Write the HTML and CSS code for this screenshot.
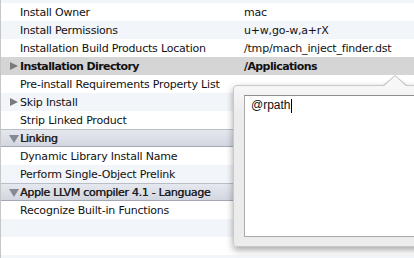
FILE: index.html
```html
<!DOCTYPE html>
<html lang="en">
<head>
  <meta charset="UTF-8" />
  <title>Build Settings</title>
  <link rel="stylesheet" href="styles.css">
</head>
<body>

  <div class="settings">
    <div class="row alt top-row">
      <span class="label">Install Group</span>
      <span class="value">staff</span>
    </div>
    <div class="row">
      <span class="label">Install Owner</span>
      <span class="value">mac</span>
    </div>
    <div class="row alt">
      <span class="label">Install Permissions</span>
      <span class="value">u+w,go-w,a+rX</span>
    </div>
    <div class="row">
      <span class="label">Installation Build Products Location</span>
      <span class="value">/tmp/mach_inject_finder.dst</span>
    </div>
    <div class="row selected bold">
      <span class="disclosure closed"></span>
      <span class="label">Installation Directory</span>
      <span class="value">/Applications</span>
    </div>
    <div class="row">
      <span class="label">Pre-install Requirements Property List</span>
      <span class="value"></span>
    </div>
    <div class="row alt">
      <span class="disclosure closed"></span>
      <span class="label">Skip Install</span>
      <span class="value"></span>
    </div>
    <div class="row">
      <span class="label">Strip Linked Product</span>
      <span class="value"></span>
    </div>

    <div class="row section">
      <span class="disclosure open"></span>
      <span class="label">Linking</span>
    </div>
    <div class="row">
      <span class="label">Dynamic Library Install Name</span>
      <span class="value"></span>
    </div>
    <div class="row alt">
      <span class="label">Perform Single-Object Prelink</span>
      <span class="value"></span>
    </div>

    <div class="row section">
      <span class="disclosure open"></span>
      <span class="label">Apple LLVM compiler 4.1 - Language</span>
    </div>
    <div class="row">
      <span class="label">Recognize Built-in Functions</span>
      <span class="value"></span>
    </div>
    <div class="row alt"></div>
    <div class="row"></div>
    <div class="row alt short"></div>
  </div>

  <!-- value editor popover for Installation Directory -->
  <div class="popover">
    <div class="editor">
      <span class="editor-text">@rpath</span><span class="caret"></span>
    </div>
  </div>

</body>
</html>
```

FILE: styles.css
```css
html {
  overflow: hidden;
}

body {
  margin: 0;
  background-color: white;
  font-family: 'DejaVu Sans', sans-serif;
  font-size: 11px;
  color: #111;
  overflow: hidden;
  position: relative;
  height: 258px;
}

.settings {
  border-left: 1px solid #c6c6c6;
  margin-top: -15px;
}

.row {
  display: flex;
  align-items: center;
  position: relative;
  height: 18px;
  box-sizing: border-box;
  padding-top: 1px;
  letter-spacing: -0.2px;
  white-space: nowrap;
  background-color: white;
}

.row.short {
  height: 3px;
}

.row.alt {
  background-color: #f2f5f9;
}

.row.selected {
  background-color: #d5d5d5;
}

.row.bold {
  font-weight: bold;
  letter-spacing: -0.6px;
}

.label {
  width: 224px;
  padding-left: 19px;
  overflow: hidden;
}

.value {
  flex: 1;
}

.section {
  background: linear-gradient(#e6e8ef, #d2d6df);
  border-top: 1px solid #b9bdc7;
  border-bottom: 1px solid #a3a8b3;
  letter-spacing: -0.3px;
  color: #1e1e1e;
  text-shadow: 0.4px 0 0 #333;
}

.disclosure {
  position: absolute;
  width: 0;
  height: 0;
}

.disclosure.closed {
  left: 9px;
  top: 5px;
  border-top: 4.5px solid transparent;
  border-bottom: 4.5px solid transparent;
  border-left: 8px solid #7b7b7b;
}

.disclosure.open {
  left: 8px;
  top: 5px;
  border-left: 5px solid transparent;
  border-right: 5px solid transparent;
  border-top: 8px solid #858a94;
}

.popover {
  position: absolute;
  left: 233px;
  top: 85px;
  width: 200px;
  height: 162px;
  background: linear-gradient(#f7f7f7, #ececec 30px);
  border: 1px solid #c9c9c9;
  border-radius: 4px;
  box-shadow: 0 3px 7px rgba(0, 0, 0, 0.35);
  box-sizing: border-box;
  padding: 9px 0 9px 10px;
}

.popover::before {
  content: "";
  position: absolute;
  left: 148px;
  top: -11px;
  border-left: 13px solid transparent;
  border-right: 13px solid transparent;
  border-bottom: 11px solid #c4c4c4;
}

.popover::after {
  content: "";
  position: absolute;
  left: 149px;
  top: -10px;
  border-left: 12px solid transparent;
  border-right: 12px solid transparent;
  border-bottom: 11px solid #f7f7f7;
}

.editor {
  height: 100%;
  background-color: white;
  border: 1px solid #a9a9a9;
  border-top-color: #8e8e8e;
  box-sizing: border-box;
  padding: 2px 0 0 6px;
  font-family: 'Liberation Sans', sans-serif;
  font-size: 12px;
  color: #111;
  display: flex;
  align-items: flex-start;
}

.caret {
  display: inline-block;
  width: 1px;
  height: 14px;
  margin-top: 1px;
  background-color: #000;
}
```
